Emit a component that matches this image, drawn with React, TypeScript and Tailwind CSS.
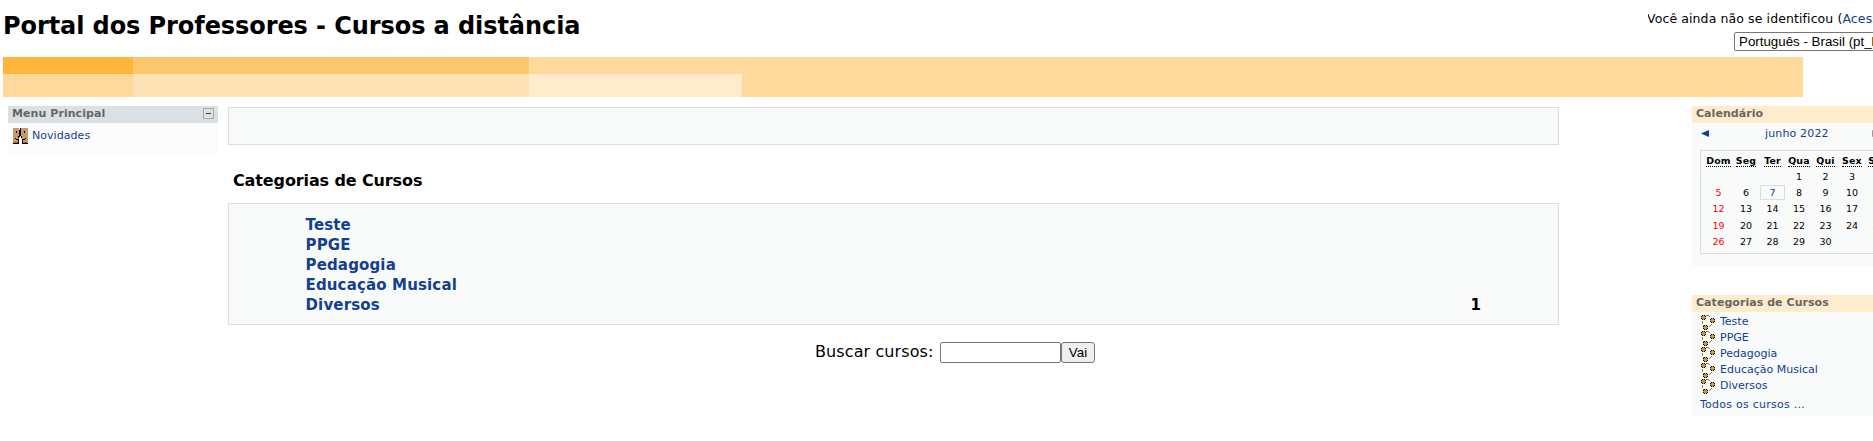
import React from "react";

const categories = ["Teste", "PPGE", "Pedagogia", "Educação Musical", "Diversos"];
const weekdays = ["Dom", "Seg", "Ter", "Qua", "Qui", "Sex", "Sáb"];
const weeks = [
  ["", "", "", "1", "2", "3", "4"],
  ["5", "6", "7", "8", "9", "10", "11"],
  ["12", "13", "14", "15", "16", "17", "18"],
  ["19", "20", "21", "22", "23", "24", "25"],
  ["26", "27", "28", "29", "30", "", ""],
];

function FacesIcon() {
  return (
    <svg width="15" height="16" viewBox="0 0 15 16" shapeRendering="crispEdges" className="mr-1 -ml-px shrink-0 translate-x-px">
      <path fill="#cc9966" d="M0 0h6v15H0zM8 0h7v15H8z" />
      <path fill="#996633" d="M0 14h5v1H0zM10 14h5v1h-5z" />
      <path
        fill="#000"
        d="M7 0h1v8H7zM6 2h1v7H6zM3 3h1v2H3zM11 3h1v2h-1zM2 10h1v1H2zM3 11h3v1H3zM12 10h1v1h-1zM9 11h3v1H9zM5 8h1v2H5zM8 8h1v2H8zM5 12h1v3H5zM9 12h1v3H9zM0 15h6v1H0zM9 15h6v1H9z"
      />
      <path fill="#fff" d="M7 8h1v8H7zM6 11h1v5H6zM8 11h1v5H8z" />
    </svg>
  );
}

function Dot({ x, y }: { x: number; y: number }) {
  return (
    <g transform={`translate(${x} ${y})`}>
      <path fill="#cc9933" d="M1 0h3v5H1zM0 1h5v3H0z" />
      <path fill="#000" d="M1 0h1v1H1zM3 0h1v1H3zM0 1h1v1H0zM4 1h1v1H4zM0 3h1v1H0zM4 3h1v1H4zM1 4h1v1H1zM3 4h1v1H3z" />
    </g>
  );
}

function CourseIcon() {
  return (
    <svg width="16" height="16" viewBox="0 0 16 16" shapeRendering="crispEdges" className="shrink-0">
      <path fill="#a87848" d="M6 0h3v1H6zM9 1h1v1H9zM2 6h1v3H2zM3 10h1v1H3zM11 9h1v1h-1zM10 10h1v1h-1zM9 11h1v1H9z" />
      <Dot x={1} y={0} />
      <Dot x={10} y={3} />
      <Dot x={3} y={10} />
    </svg>
  );
}

function Banner() {
  return (
    <div className="ml-[3px] flex h-10 w-[1800px] bg-[#ffd99b]">
      <div className="h-[17px] w-[130px] bg-[#ffb53a]" />
      <div className="flex w-[396px] flex-col">
        <div className="h-[17px] bg-[#ffc76c]" />
        <div className="flex-1 bg-[#ffe3b5]" />
      </div>
      <div className="mt-[17px] w-[213px] bg-[#ffeccd]" />
    </div>
  );
}

function dayClass(day: string, col: number) {
  if (day === "7") return "mx-auto h-[15px] w-[25px] border border-[#dddddd] leading-[13px] text-[#123f8f]";
  if (col === 0) return "text-[#ff0000]";
  if (col === 6) return "text-[#ffa500]";
  return "";
}

export default function App() {
  return (
    <div className="h-[441px] w-full overflow-hidden bg-white font-['DejaVu_Sans',sans-serif] text-black">
      <header className="flex h-[57px] justify-between pl-[3px]">
        <h1 className="pt-[10px] text-[24px] leading-8 font-bold tracking-[-0.08px] whitespace-nowrap">
          Portal dos Professores - Cursos a distância
        </h1>
        <div className="w-[225px] overflow-hidden whitespace-nowrap">
          <p className="-ml-px pt-[10px] text-[12.5px] leading-[18px] tracking-[0.1px]">
            Você ainda não se identificou (<a className="text-[#123f8f]">Acesso</a>)
          </p>
          <div className="mt-1 ml-[86px] h-[19px] w-[180px] rounded-[2px] border border-[#767676] pl-1 font-['Liberation_Sans',sans-serif] text-[13.33px] leading-[17px]">
            Português - Brasil (pt_br)
          </div>
        </div>
      </header>
      <Banner />

      <div className="flex w-full">
        <aside className="mt-[9px] ml-2 h-[49px] w-[210px] shrink-0 bg-[#fcfcfc]">
          <div className="flex h-[17px] items-start justify-between bg-[#dbe0e4] pr-1 pl-1">
            <h2 className="text-[11px] leading-[15px] font-bold tracking-[0.07px] text-[#666666]">Menu Principal</h2>
            <span className="mt-[2px] flex h-[11px] w-[11px] items-center justify-center border border-[#aaaaaa]">
              <span className="h-px w-[5px] bg-[#444444]" />
            </span>
          </div>
          <div className="flex pt-[5px] pl-[5px]">
            <FacesIcon />
            <a className="ml-px text-[11px] leading-[15px] tracking-[0.05px] text-[#123f8f]">Novidades</a>
          </div>
        </aside>

        <main className="mt-[10px] ml-[10px] w-[1331px] shrink-0">
          <div className="h-[38px] border border-[#dddddd] bg-[#f9fafa]" />
          <h2 className="mt-[26px] pl-[5px] text-[16px] leading-5 font-bold tracking-[-0.12px]">Categorias de Cursos</h2>
          <section className="mt-3 flex h-[122px] justify-between border border-[#dddddd] bg-[#f9fafa] pt-[11px] pr-[77px] pl-[76.5px] text-[15px] leading-5 font-bold tracking-[0.15px]">
            <ul>
              {categories.map((name) => (
                <li key={name}>
                  <a className="text-[#123f8f]">{name}</a>
                </li>
              ))}
            </ul>
            <span className="mt-20">1</span>
          </section>
          <form className="mt-[17px] ml-[587px] flex h-[21px] items-center">
            <label className="w-[125px] pb-[2px] text-[16px] leading-5 tracking-[0.1px] whitespace-nowrap">
              Buscar cursos:
            </label>
            <input className="h-[21px] w-[121px] rounded-[2px] border border-[#767676] bg-white" />
            <button
              type="button"
              className="h-[21px] w-[34px] rounded-[3px] border border-[#767676] bg-[#efefef] font-['Liberation_Sans',sans-serif] text-[13.33px] leading-[19px]"
            >
              Vai
            </button>
          </form>
        </main>

        <aside className="mt-[9px] ml-[133px] min-w-0 flex-1 overflow-hidden whitespace-nowrap">
          <section className="h-[160px] w-[210px] bg-[#f9fafa]">
            <h2 className="h-[17px] bg-[#ffeccd] pl-1 text-[11px] leading-[15px] font-bold tracking-[0.05px] text-[#666666]">
              Calendário
            </h2>
            <div className="flex h-[27px] pt-[3px] pl-2 text-[11px] leading-[15px] text-[#123f8f]">
              <svg width="10" height="14" viewBox="0 0 10 14">
                <path fill="#123f8f" d="M1 7.500 9 4v7z" />
              </svg>
              <a className="ml-[55px] w-[107px] tracking-[0.15px]">junho 2022</a>
              <svg width="10" height="14" viewBox="0 0 10 14">
                <path fill="#c58a8a" d="M0 4v7L8 7.500z" />
              </svg>
            </div>
            <div className="ml-2 h-[104px] w-[194px] border border-[#dddddd] pt-[3px] pl-[3.500px] text-center text-[9.5px]">
              <div className="grid h-[14px] grid-cols-[28px_27px_26px_27px_26px_27px_26px] leading-[15px] font-bold">
                {weekdays.map((d) => (
                  <div key={d} className="flex justify-center">
                    <span className="h-[13px] border-b border-dotted border-black text-[9.4px] leading-[14px] tracking-[0.2px]">
                      {d}
                    </span>
                  </div>
                ))}
              </div>
              {weeks.map((week, i) => (
                <div
                  key={i}
                  className="grid h-[16.4px] grid-cols-[28px_27px_26px_27px_26px_27px_26px] items-center leading-[15px]"
                >
                  {week.map((day, j) => (
                    <div key={j} className={dayClass(day, j)}>
                      {day}
                    </div>
                  ))}
                </div>
              ))}
            </div>
          </section>

          <section className="mt-[29px] h-[121px] w-[210px] bg-[#f9fafa] text-[11px] text-[#123f8f]">
            <h2 className="h-[17px] bg-[#ffeccd] pl-1 leading-[15px] font-bold tracking-[0.05px] text-[#666666]">
              Categorias de Cursos
            </h2>
            <ul className="pt-[3px] pl-2">
              {categories.map((name) => (
                <li key={name} className="flex h-4">
                  <CourseIcon />
                  <a className="ml-1 leading-[13px]">{name}</a>
                </li>
              ))}
            </ul>
            <a className="block pl-2 leading-[19px] tracking-[0.25px]">Todos os cursos ...</a>
          </section>
        </aside>
      </div>
    </div>
  );
}
